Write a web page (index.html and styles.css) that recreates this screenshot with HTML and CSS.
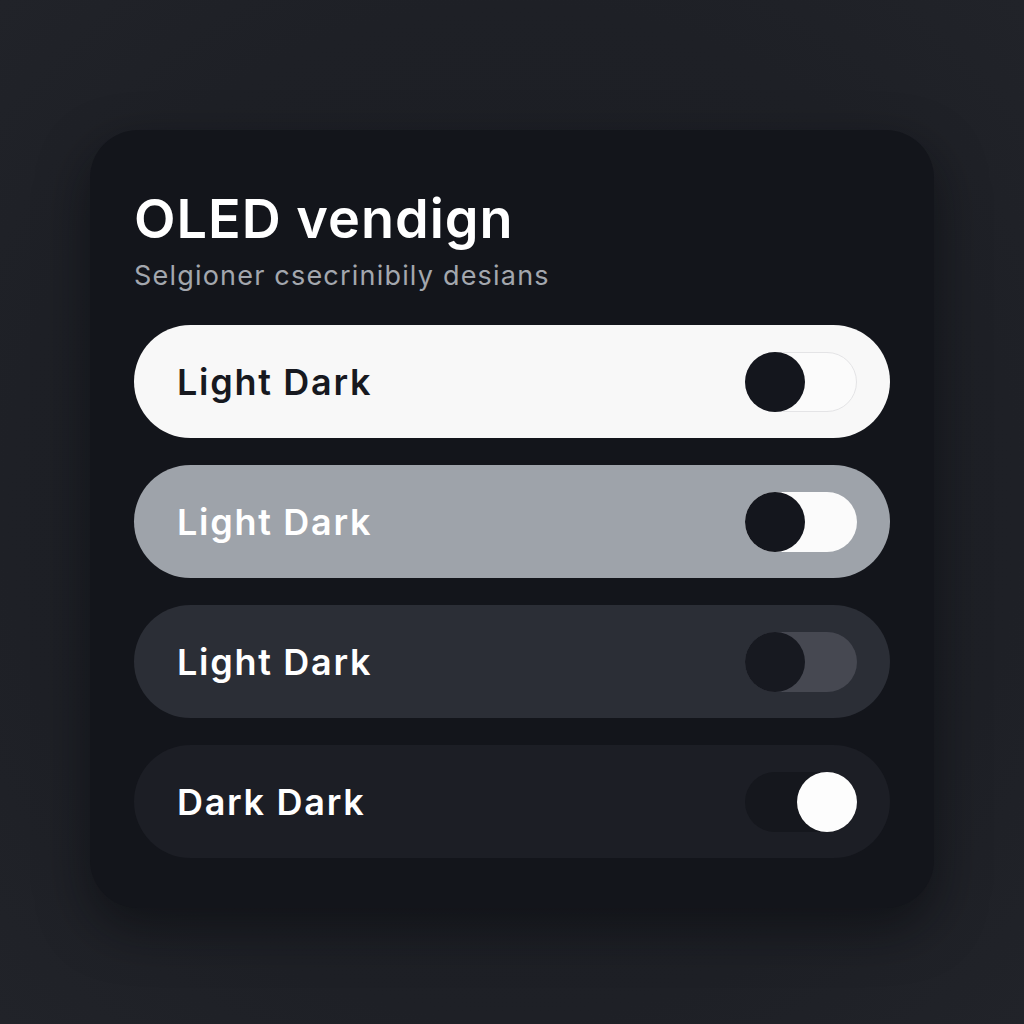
FILE: index.html
```html
<!DOCTYPE html>
<html>
<head>
<meta charset="utf-8">
<link rel="stylesheet" href="styles.css">
</head>
<body>
<div class="page">
  <section class="card">
    <h1 class="title">OLED vendign</h1>
    <p class="subtitle">Selgioner csecrinibily desians</p>
    <div class="rows">
      <div class="row row-light">
        <span class="label">Light Dark</span>
        <span class="toggle"><span class="knob"></span></span>
      </div>
      <div class="row row-gray">
        <span class="label">Light Dark</span>
        <span class="toggle"><span class="knob"></span></span>
      </div>
      <div class="row row-slate">
        <span class="label">Light Dark</span>
        <span class="toggle"><span class="knob"></span></span>
      </div>
      <div class="row row-dark">
        <span class="label">Dark Dark</span>
        <span class="toggle toggle-on"><span class="knob"></span></span>
      </div>
    </div>
  </section>
</div>
</body>
</html>
```
FILE: styles.css
```css
* { box-sizing: border-box; }
html, body { margin: 0; padding: 0; }
body {
  width: 1024px;
  height: 1024px;
  background: #1d1f25;
  font-family: "Inter", "Open Sans", sans-serif;
}
.page {
  width: 1024px;
  height: 1024px;
  padding: 130px 90px 0 90px;
  background: radial-gradient(ellipse at 50% 50%, #1c1e24 0%, #1e2026 70%, #212329 100%);
}
.card {
  width: 844px;
  height: 778px;
  background: #13151b;
  border-radius: 48px;
  padding: 62px 44px 0 44px;
  box-shadow: 0 20px 50px rgba(8, 9, 12, 0.55);
}
.title {
  margin: 0;
  color: #ffffff;
  font-size: 54px;
  font-weight: 600;
  line-height: 54px;
  letter-spacing: 1px;
}
.subtitle {
  margin: 16px 0 0 0;
  color: #a3a7ae;
  font-size: 27px;
  font-weight: 400;
  line-height: 27px;
  letter-spacing: 1.2px;
}
.rows {
  margin-top: 36px;
  display: flex;
  flex-direction: column;
  gap: 27px;
}
.row {
  height: 113px;
  border-radius: 57px;
  display: flex;
  align-items: center;
  justify-content: space-between;
  padding: 0 33px 0 43px;
}
.label {
  font-size: 36px;
  font-weight: 600;
  letter-spacing: 1.7px;
}
.toggle {
  width: 112px;
  height: 60px;
  border-radius: 30px;
  display: flex;
  align-items: center;
  justify-content: flex-start;
}
.knob {
  width: 60px;
  height: 60px;
  border-radius: 50%;
  background: #14161d;
}
.toggle-on { justify-content: flex-end; }

.row-light { background: #f8f8f8; }
.row-light .label { color: #17191f; }
.row-light .toggle { background: #fbfbfb; border: 1.5px solid #e4e4e6; }
.row-light .knob { margin: -1.5px; }

.row-gray { background: #9ea3aa; }
.row-gray .label { color: #ffffff; }
.row-gray .toggle { background: #fbfbfb; }

.row-slate { background: #2b2e36; }
.row-slate .label { color: #ffffff; }
.row-slate .toggle { background: #464851; }
.row-slate .knob { background: #171920; }

.row-dark { background: #1c1e25; }
.row-dark .label { color: #ffffff; }
.row-dark .toggle { background: #15171d; }
.row-dark .knob { background: #fdfdfd; }
```
